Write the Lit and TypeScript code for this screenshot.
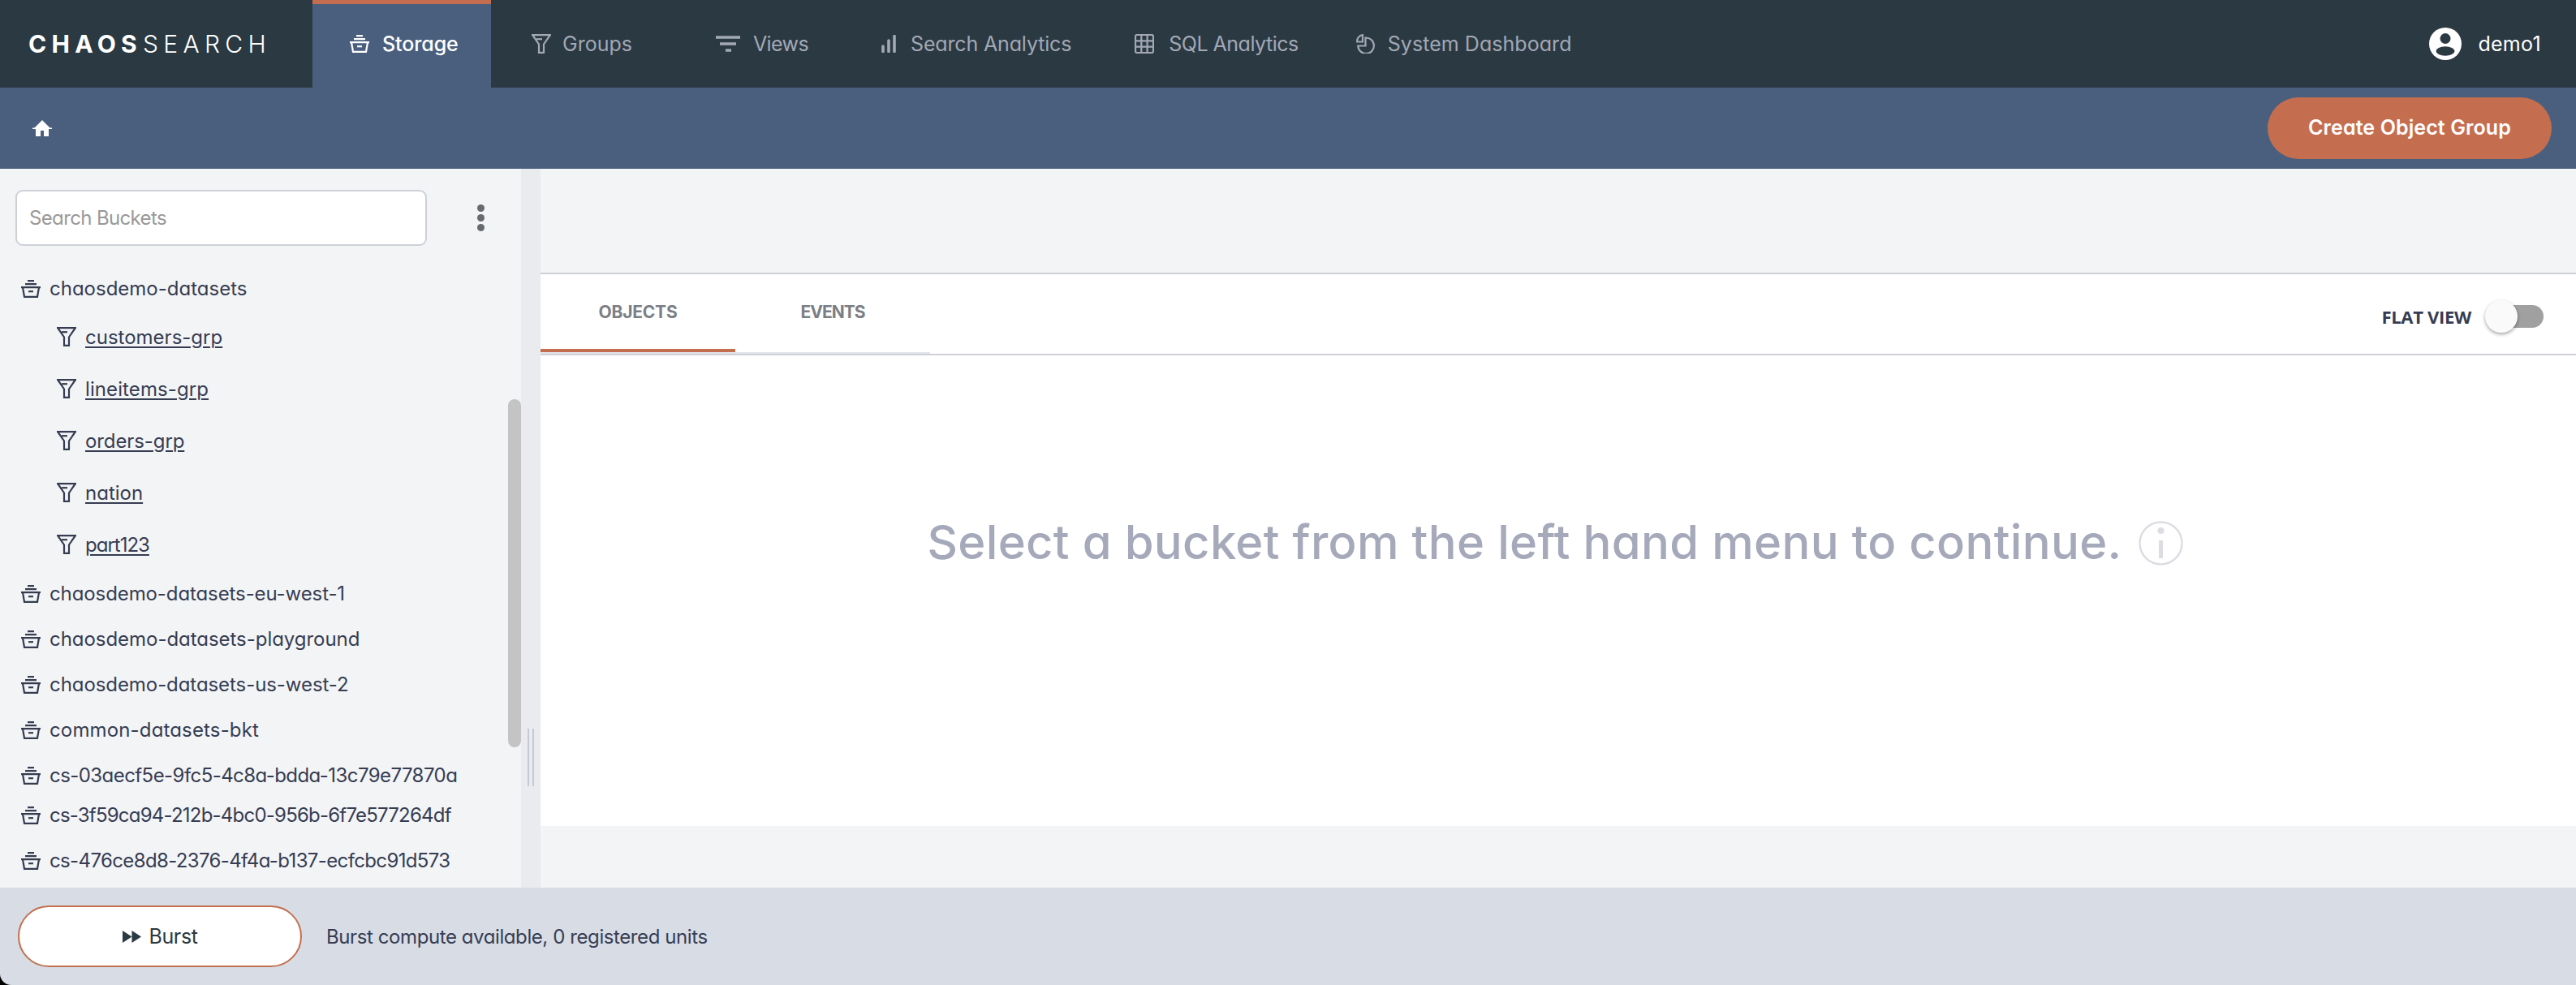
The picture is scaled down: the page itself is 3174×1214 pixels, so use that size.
import { LitElement, html, css, svg } from "lit";
import { customElement } from "lit/decorators.js";

const bucket = svg`<path d="M9 1.2H17M6 5.2H20M1 9.2H25" /><path d="M3 9.2L5 20.8H21L23 9.2" /><path d="M10 14.2H16" />`;
const funnel = svg`<path d="M1.2 1.2H22.8L15 12.5V22.8H9V12.5Z" /><path d="M6 6.2H13" /><path d="M17 5.2h.01" />`;

const NAV = [
  { label: "Storage", cls: "t-storage", ls: -0.1, w: 26, h: 22, vb: "0 0 26 22", icon: bucket },
  { label: "Groups", cls: "t-groups", ls: 0, w: 24, h: 24, vb: "0 0 24 24", icon: funnel },
  {
    label: "Views", cls: "t-views", ls: -0.6, w: 30, h: 20, vb: "0 0 30 20",
    icon: svg`<path class="thick" d="M0 2H30M5 10H25M12 18H19" />`,
  },
  {
    label: "Search Analytics", cls: "t-search", ls: -0.15, w: 18, h: 22, vb: "0 0 18 22",
    icon: svg`<path class="thick round" d="M2 14V20.5M9 7V20.5M16 1.5V20.5" />`,
  },
  {
    label: "SQL Analytics", cls: "t-sql", ls: -0.5, w: 24, h: 24, vb: "0 0 24 24",
    icon: svg`<rect x="1" y="1" width="22" height="22" rx="2" /><path d="M1 8.3H23M1 15.6H23M8.3 1V23M15.6 1V23" />`,
  },
  {
    label: "System Dashboard", cls: "t-system", ls: 0.05, w: 24, h: 24, vb: "0 0 24 24",
    icon: svg`<path d="M11.5 4.5A9.8 9.8 0 1 1 2.3 14.5H11.5Z" /><path d="M8 1.2A7.5 7.5 0 0 0 1.2 9.5H8Z" />`,
  },
];

const GROUPS = [
  { n: "customers-grp", ls: 0 },
  { n: "lineitems-grp", ls: 0.1 },
  { n: "orders-grp", ls: -0.1 },
  { n: "nation", ls: 0 },
  { n: "part123", ls: -1 },
];
const BUCKETS = [
  { n: "chaosdemo-datasets-eu-west-1", ls: -0.1, cls: "" },
  { n: "chaosdemo-datasets-playground", ls: -0.04, cls: "" },
  { n: "chaosdemo-datasets-us-west-2", ls: -0.07, cls: "" },
  { n: "common-datasets-bkt", ls: 0.15, cls: "" },
  { n: "cs-03aecf5e-9fc5-4c8a-bdda-13c79e77870a", ls: -0.56, cls: "" },
  { n: "cs-3f59ca94-212b-4bc0-956b-6f7e577264df", ls: -0.78, cls: "tight" },
  { n: "cs-476ce8d8-2376-4f4a-b137-ecfcbc91d573", ls: -0.63, cls: "" },
];

@customElement("app-root")
export class AppRoot extends LitElement {
  static styles = css`
    :host {
      display: block;
      font-family: Inter, "Noto Sans", sans-serif;
      font-feature-settings: "cv11";
      font-size: 24px;
      color: #363d52;
    }
    * { box-sizing: border-box; }
    .app {
      display: flex;
      flex-direction: column;
      height: 1214px;
      overflow: hidden;
      background: #000;
    }
    .topbar {
      display: flex;
      align-items: stretch;
      height: 108px;
      flex: none;
      background: #2b3942;
    }
    .logo {
      width: 385px;
      flex: none;
      display: flex;
      align-items: center;
      padding-left: 35px;
      font-size: 30px;
      letter-spacing: 6.3px;
      color: #fff;
      white-space: nowrap;
    }
    .logo b { font-weight: 700; }
    .logo span { font-weight: 300; margin-left: 1px; }
    .tab {
      display: flex;
      align-items: center;
      color: #a2a8b6;
      font-size: 25px;
      white-space: nowrap;
    }
    .tab svg { fill: none; stroke: currentColor; stroke-width: 2.2; flex: none; }
    .tab .thick { stroke-width: 3.6; }
    .tab .round { stroke-linecap: round; }
    .tab.active {
      width: 220px;
      padding-left: 45px;
      background: #4a5f7e;
      border-top: 5px solid #c56e4f;
      color: #fff;
      font-weight: 500;
      padding-bottom: 5px;
    }
    .t-storage svg { margin-right: 15px; }
    .t-groups { margin-left: 50px; }
    .t-groups svg { margin-right: 14px; }
    .t-views { margin-left: 103px; }
    .t-views svg { margin-right: 16px; }
    .t-search { margin-left: 90px; }
    .t-search svg { margin-right: 18px; }
    .t-sql { margin-left: 78px; }
    .t-sql svg { margin-right: 18px; }
    .t-system { margin-left: 71px; }
    .t-system svg { margin-right: 15px; }
    .user {
      margin-left: auto;
      display: flex;
      align-items: center;
      gap: 20px;
      padding-right: 43px;
      color: #fff;
      font-size: 25px;
      letter-spacing: 0.3px;
    }
    .subbar {
      height: 100px;
      flex: none;
      display: flex;
      align-items: center;
      justify-content: space-between;
      padding: 0 30px 0 40px;
      background: #4a5f7e;
    }
    .subbar svg { display: block; }
    .cta {
      width: 350px;
      height: 76px;
      border: 0;
      border-radius: 38px;
      padding: 0 0 2px;
      background: #c56e4f;
      color: #fff;
      font: 600 25px Inter, sans-serif;
      font-feature-settings: "cv11";
      letter-spacing: 0.1px;
    }
    .body {
      flex: 1;
      display: flex;
      min-height: 0;
      background: #f3f4f6;
    }
    .side {
      position: relative;
      width: 642px;
      flex: none;
      overflow: hidden;
      background: #f3f4f6;
    }
    .search {
      display: flex;
      align-items: center;
      padding: 26px 0 0 19px;
    }
    .search input {
      width: 507px;
      height: 69px;
      padding: 0 15px;
      border: 2px solid #cdd0d8;
      border-radius: 9px;
      background: #fff;
      font: 400 24px Inter, sans-serif;
      font-feature-settings: "cv11";
      letter-spacing: -0.64px;
      outline: none;
    }
    .search input::placeholder { color: #999; opacity: 1; }
    .kebab {
      display: flex;
      flex-direction: column;
      gap: 3px;
      margin-left: 62px;
    }
    .kebab i {
      width: 9px;
      height: 9px;
      border-radius: 50%;
      background: #666b70;
    }
    .tree { margin-top: 24px; }
    .row {
      display: flex;
      align-items: center;
      height: 56px;
      padding-left: 25px;
      white-space: nowrap;
    }
    .row.tight { height: 42px; margin-bottom: 7px; }
    .row svg { margin-right: 10px; margin-top: 1px; flex: none; fill: none; stroke: #363d52; stroke-width: 2.2; }
    .grp {
      display: flex;
      align-items: center;
      height: 64px;
      padding-left: 70px;
    }
    .grp svg { margin-right: 11px; flex: none; fill: none; stroke: #363d52; stroke-width: 2.2; }
    .grp a {
      color: #363d52;
      text-decoration: underline;
      text-decoration-thickness: 2px;
      text-underline-offset: 3px;
    }
    .thumb {
      position: absolute;
      top: 284px;
      right: 0;
      width: 16px;
      height: 429px;
      border-radius: 8px;
      background: #c4c4c4;
    }
    .split {
      width: 24px;
      flex: none;
      background: #e9ebee;
      padding: 690px 0 0 8px;
    }
    .split i {
      display: block;
      width: 8px;
      height: 71px;
      border-left: 2px solid #c5c9d6;
      border-right: 2px solid #c5c9d6;
    }
    .main {
      flex: 1;
      min-width: 0;
      padding: 128px 0 76px;
    }
    .panel {
      height: 100%;
      display: flex;
      flex-direction: column;
      background: #fff;
      border-top: 2px solid #cdd0d8;
    }
    .tabsrow {
      display: flex;
      align-items: flex-start;
      justify-content: space-between;
      height: 100px;
      flex: none;
      border-bottom: 2px solid #cdd0d8;
    }
    .tabs {
      display: flex;
      height: 98px;
      border-bottom: 2px solid #e4e5ea;
    }
    .ptab {
      width: 240px;
      height: 96px;
      display: flex;
      align-items: center;
      justify-content: center;
      border-bottom: 4px solid transparent;
      color: #7b7f85;
      font-size: 21px;
      font-weight: 700;
      letter-spacing: -0.2px;
    }
    .ptab.on { border-bottom-color: #c56e4f; }
    .ptab.ev { letter-spacing: -1px; }
    .flat {
      display: flex;
      align-items: center;
      gap: 18px;
      height: 98px;
      padding: 6px 40px 0 0;
      font: 700 22px "Open Sans", sans-serif;
      letter-spacing: -0.3px;
      color: #363d52;
    }
    .toggle {
      position: relative;
      width: 71px;
      height: 28px;
      border-radius: 14px;
      background: #a0a0a0;
    }
    .toggle i {
      position: absolute;
      left: -1px;
      top: -6px;
      width: 40px;
      height: 40px;
      border-radius: 50%;
      background: #fafafa;
      box-shadow: 0 2px 4px rgba(0, 0, 0, 0.35);
    }
    .msg {
      display: flex;
      align-items: center;
      justify-content: center;
      gap: 21px;
      padding: 192px 7px 0 0;
      color: #a5a9ba;
      font-size: 58px;
      line-height: 80px;
      font-weight: 500;
      letter-spacing: 0.33px;
      white-space: nowrap;
    }
    .msg span { margin-top: -2px; }
    .msg svg { flex: none; }
    .foot {
      height: 120px;
      flex: none;
      display: flex;
      align-items: center;
      padding: 0 0 0 22px;
      background: #d8dce5;
      border-bottom-left-radius: 14px;
    }
    .burst {
      width: 350px;
      height: 76px;
      display: flex;
      align-items: center;
      justify-content: center;
      gap: 10px;
      border: 2px solid #c1714f;
      border-radius: 38px;
      background: #fff;
      color: #2b3942;
      font: 400 25px Inter, sans-serif;
      font-feature-settings: "cv11";
      letter-spacing: -0.4px;
    }
    .burst svg { fill: #2b3942; }
    .status {
      margin-left: 30px;
      letter-spacing: -0.41px;
    }
  `;

  private bucketIcon() {
    return html`<svg width="26" height="22" viewBox="0 0 26 22">${bucket}</svg>`;
  }

  render() {
    return html`
      <div class="app">
        <header class="topbar">
          <div class="logo"><b>CHAOS</b><span>SEARCH</span></div>
          ${NAV.map(
            (t, i) => html`
              <div class="tab ${t.cls} ${i === 0 ? "active" : ""}">
                <svg width=${t.w} height=${t.h} viewBox=${t.vb}>${t.icon}</svg>
                <span style="letter-spacing:${t.ls}px">${t.label}</span>
              </div>
            `
          )}
          <div class="user">
            <svg width="40" height="40" viewBox="0 0 40 40">
              <circle cx="20" cy="20" r="20" fill="#fff" />
              <circle cx="20" cy="13.5" r="6.5" fill="#2b3942" />
              <ellipse cx="20" cy="29" rx="11.5" ry="5.8" fill="#2b3942" />
            </svg>
            <span>demo1</span>
          </div>
        </header>
        <div class="subbar">
          <svg width="24" height="20" viewBox="0 0 24 20">
            <path fill="#fff" d="M12 0L21.5 9.5H24V11H20V20H14V13H10V20H4V11H0V9.5H2.5Z" />
          </svg>
          <button class="cta">Create Object Group</button>
        </div>
        <div class="body">
          <aside class="side">
            <div class="search">
              <input placeholder="Search Buckets" />
              <div class="kebab"><i></i><i></i><i></i></div>
            </div>
            <div class="tree">
              <div class="row">${this.bucketIcon()}<span>chaosdemo-datasets</span></div>
              ${GROUPS.map(
                (g) => html`
                  <div class="grp">
                    <svg width="24" height="24" viewBox="0 0 24 24">${funnel}</svg>
                    <a style="letter-spacing:${g.ls}px">${g.n}</a>
                  </div>
                `
              )}
              ${BUCKETS.map(
                (b) => html`
                  <div class="row ${b.cls}">
                    ${this.bucketIcon()}<span style="letter-spacing:${b.ls}px">${b.n}</span>
                  </div>
                `
              )}
            </div>
            <div class="thumb"></div>
          </aside>
          <div class="split"><i></i></div>
          <main class="main">
            <section class="panel">
              <div class="tabsrow">
                <div class="tabs">
                  <div class="ptab on">OBJECTS</div>
                  <div class="ptab ev">EVENTS</div>
                </div>
                <div class="flat">
                  <span>FLAT VIEW</span>
                  <div class="toggle"><i></i></div>
                </div>
              </div>
              <div class="msg">
                <span>Select a bucket from the left hand menu to continue.</span>
                <svg width="55" height="55" viewBox="0 0 55 55">
                  <circle cx="27.5" cy="27.5" r="26" fill="none" stroke="#dcdde3" stroke-width="2.4" />
                  <circle cx="27.5" cy="12" r="4" fill="#dcdde3" />
                  <rect x="25" y="24" width="5" height="22" fill="#dcdde3" />
                </svg>
              </div>
            </section>
          </main>
        </div>
        <footer class="foot">
          <div class="burst">
            <svg width="23" height="15" viewBox="0 0 23 15"><path d="M0 0L11.5 7.5L0 15ZM11.5 0L23 7.5L11.5 15Z" /></svg>
            <span>Burst</span>
          </div>
          <div class="status">Burst compute available, 0 registered units</div>
        </footer>
      </div>
    `;
  }
}
